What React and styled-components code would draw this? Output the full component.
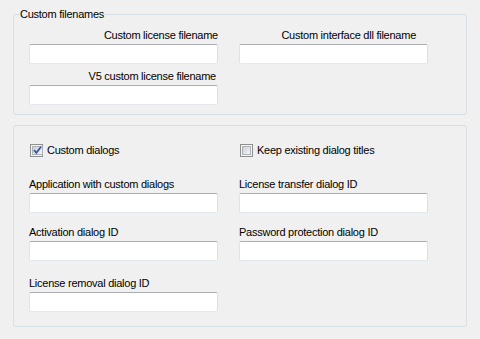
import React from 'react';
import styled, { createGlobalStyle } from 'styled-components';

const Global = createGlobalStyle`
  html, body {
    margin: 0;
    background: #f0f0f0;
  }
  body {
    font-family: "Liberation Sans", Arial, sans-serif;
    font-size: 11px;
    letter-spacing: -0.25px;
    color: #000;
  }
`;

const Page = styled.div`
  width: 480px;
  height: 339px;
  box-sizing: border-box;
  padding: 8px 13px 0 13px;
  display: flex;
  flex-direction: column;
  gap: 10px;
`;

const Group = styled.fieldset`
  margin: 0;
  min-width: 0;
  border: 1px solid #d5dfe5;
  border-radius: 3px;
  padding: ${p => p.$top}px 0 ${p => p.$bottom}px 15px;
  display: flex;
  flex-direction: column;
`;

const Legend = styled.legend`
  margin-left: -9px;
  padding: 0 1px 0 0;
  line-height: 13px;
`;

const Row = styled.div`
  display: grid;
  grid-template-columns: 189px 189px;
  column-gap: 21px;
  margin-top: ${p => p.$space || 0}px;
`;

const Field = styled.label`
  display: flex;
  flex-direction: column;
  gap: 2px;
`;

const Caption = styled.span`
  display: block;
  line-height: 13px;
  height: 13px;
  white-space: nowrap;
  text-align: ${p => (p.$right ? 'right' : 'left')};
  padding-right: ${p => p.$pad || 0}px;
`;

const Input = styled.input`
  box-sizing: border-box;
  width: 189px;
  height: 20px;
  margin: 0;
  padding: 0 3px;
  background: #fff;
  border: 1px solid #e3e9ef;
  border-top-color: #abadb3;
  border-left-color: #e2e3ea;
  border-right-color: #dbdfe6;
  border-radius: 2px;
  font: inherit;
  outline: none;
`;

const Check = styled.label`
  display: flex;
  align-items: center;
  gap: 4px;
  height: 13px;
  line-height: 13px;
  margin-left: 1px;
`;

const Box = styled.span`
  box-sizing: border-box;
  width: 13px;
  height: 13px;
  border: 1px solid #8e8f8f;
  background: #f4f4f4;
  padding: 1px;
  display: flex;
`;

const BoxInner = styled.span`
  flex: 1;
  background: linear-gradient(135deg, #cbcfd5 0%, #f6f6f6 100%);
  border: 1px solid #aeb3b9;
  display: flex;
  align-items: center;
  justify-content: center;
`;

const CheckBox = ({ checked, children }) => (
  <Check>
    <Box>
      <BoxInner>
        {checked && (
          <svg width="9" height="9" viewBox="0 0 9 9">
            <path d="M1 4.2 L3.4 6.8 L8 0.8" fill="none" stroke="#3a56a6" strokeWidth="1.8" />
          </svg>
        )}
      </BoxInner>
    </Box>
    <span>{children}</span>
  </Check>
);

const TextField = ({ label, right, pad }) => (
  <Field>
    <Caption $right={right} $pad={pad}>{label}</Caption>
    <Input type="text" />
  </Field>
);

export default function App() {
  return (
    <>
      <Global />
      <Page>
        <Group $top={8} $bottom={9}>
          <Legend>Custom filenames</Legend>
          <Row>
            <TextField label="Custom license filename" right />
            <TextField label="Custom interface dll filename" right pad={12} />
          </Row>
          <Row $space={6}>
            <TextField label="V5 custom license filename" right pad={2} />
          </Row>
        </Group>
        <Group $top={18} $bottom={14}>
          <Row>
            <CheckBox checked>Custom dialogs</CheckBox>
            <CheckBox>Keep existing dialog titles</CheckBox>
          </Row>
          <Row $space={21}>
            <TextField label="Application with custom dialogs" />
            <TextField label="License transfer dialog ID" />
          </Row>
          <Row $space={13}>
            <TextField label="Activation dialog ID" />
            <TextField label="Password protection dialog ID" />
          </Row>
          <Row $space={16}>
            <TextField label="License removal dialog ID" />
          </Row>
        </Group>
      </Page>
    </>
  );
}
